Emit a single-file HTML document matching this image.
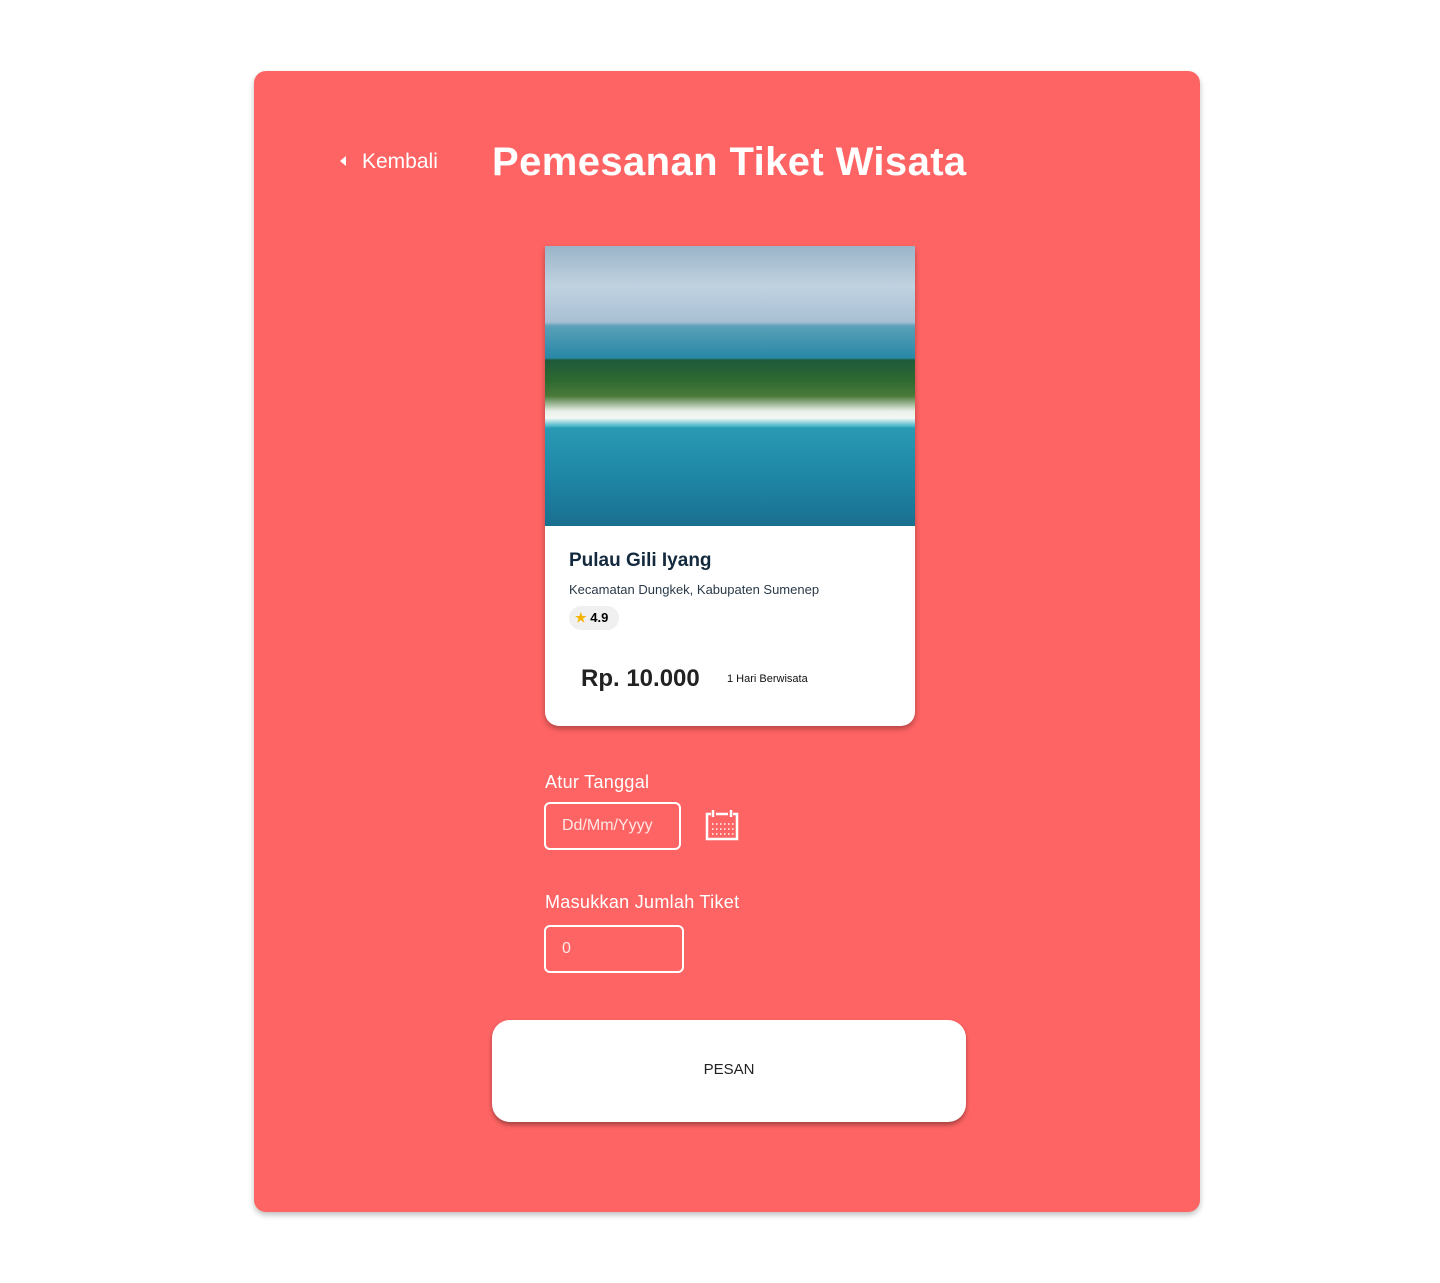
<!DOCTYPE html>
<html><head><meta charset="utf-8"><style>
*{margin:0;padding:0;box-sizing:border-box}
body{width:1440px;height:1283px;background:#fff;font-family:"Liberation Sans",sans-serif;position:relative}
.panel{position:absolute;left:254px;top:71px;width:946px;height:1141px;background:#ff6464;border-radius:12px;box-shadow:0 3px 6px rgba(0,0,0,.25)}
.back{position:absolute;left:340px;top:150px;color:#fff;font-size:21px}
.back:before{content:"";display:inline-block;border-right:6px solid #fff;border-top:5px solid transparent;border-bottom:5px solid transparent;margin-right:16px;vertical-align:2px}
h1{position:absolute;left:492px;top:140px;color:#fff;font-size:40px;font-weight:bold;letter-spacing:0.4px}
.card{position:absolute;left:545px;top:246px;width:370px;height:480px;background:#fff;border-radius:0 0 14px 14px;box-shadow:0 3px 6px rgba(0,0,0,.3);overflow:hidden}
.img{height:280px;background:
linear-gradient(180deg,transparent 0,transparent 112px,#1e5a3a 114px,#2e6a30 135px,#4a7a3a 150px,#e8efe8 165px,#f5f8f5 172px,#4ab8c8 180px,transparent 182px),
linear-gradient(180deg,#9ab4c8 0,#c0d2e0 40px,#a8c0d4 76px,#5aa0b8 80px,#2b8aa8 110px,#2a9ab4 180px,#1f87a6 230px,#1a6f90 280px)}
.t{position:absolute;left:24px;top:304px;font-size:19px;font-weight:bold;color:#13293d}
.loc{position:absolute;left:24px;top:336px;font-size:13px;color:#2a3a48}
.rate{position:absolute;left:24px;top:360px;width:50px;height:24px;border-radius:12px;background:#f0f0f0;font-size:13px;font-weight:bold;padding:4px 0 0 6px}
.rate span{color:#f6b300}
.price{position:absolute;left:36px;top:419px;font-size:24px;font-weight:bold;color:#222}
.dur{position:absolute;left:182px;top:427px;font-size:11px;color:#111}
.lab{position:absolute;left:545px;color:#fff;font-size:18px;letter-spacing:0.3px}
.inp{position:absolute;left:544px;border:2px solid #fff;border-radius:6px;color:#ffe6e6;font-size:16px;padding-left:16px;line-height:44px;height:48px}
.btn{position:absolute;left:492px;top:1020px;width:474px;height:102px;background:#fff;border-radius:18px;box-shadow:0 3px 5px rgba(0,0,0,.35);text-align:center;line-height:100px;font-size:15px;color:#222}
</style></head><body>
<div class="panel"></div>
<div class="back">Kembali</div>
<h1>Pemesanan Tiket Wisata</h1>
<div class="card"><div class="img"></div>
<div class="t">Pulau Gili Iyang</div>
<div class="loc">Kecamatan Dungkek, Kabupaten Sumenep</div>
<div class="rate"><span>★</span> 4.9</div>
<div class="price">Rp. 10.000</div>
<div class="dur">1 Hari Berwisata</div>
</div>
<div class="lab" style="top:772px">Atur Tanggal</div>
<div class="inp" style="top:802px;width:137px">Dd/Mm/Yyyy</div>
<svg style="position:absolute;left:705px;top:809px" width="34" height="32" viewBox="0 0 34 32" fill="none" stroke="#fff" stroke-width="2.5">
<path d="M6 5H2v25h30V5h-4M11 5h12"/><path d="M8 1v7M26 1v7" /><g stroke-width="1.5" stroke-dasharray="1.5 2.5"><path d="M7 15h22M7 20h22M7 25h22"/></g></svg>
<div class="lab" style="top:892px">Masukkan Jumlah Tiket</div>
<div class="inp" style="top:925px;width:140px">0</div>
<div class="btn">PESAN</div>
</body></html>
